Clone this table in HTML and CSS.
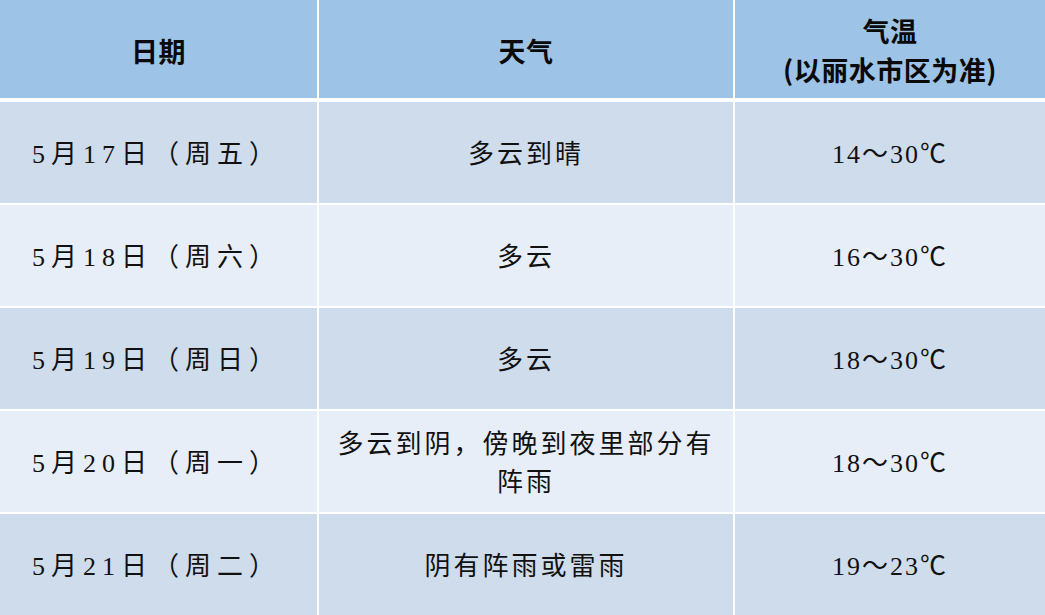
FILE: index.html
```html
<!DOCTYPE html>
<html lang="zh-CN">
<head>
<meta charset="utf-8">
<title>丽水天气预报</title>
<link rel="stylesheet" href="styles.css">
</head>
<body>
<div class="table">
  <div class="cell head"><span class="line">日期</span></div>
  <div class="cell head"><span class="line">天气</span></div>
  <div class="cell head stack"><span class="line">气温</span><span class="line">(以丽水市区为准)</span></div>

  <div class="cell dark date">5月17日（周五）</div>
  <div class="cell dark">多云到晴</div>
  <div class="cell dark temp">14～30℃</div>

  <div class="cell light date">5月18日（周六）</div>
  <div class="cell light">多云</div>
  <div class="cell light temp">16～30℃</div>

  <div class="cell dark date">5月19日（周日）</div>
  <div class="cell dark">多云</div>
  <div class="cell dark temp">18～30℃</div>

  <div class="cell light date">5月20日（周一）</div>
  <div class="cell light stack"><span class="wline">多云到阴，傍晚到夜里部分有</span><span class="wline">阵雨</span></div>
  <div class="cell light temp">18～30℃</div>

  <div class="cell dark date">5月21日（周二）</div>
  <div class="cell dark">阴有阵雨或雷雨</div>
  <div class="cell dark temp">19～23℃</div>
</div>
</body>
</html>
```

FILE: styles.css
```css
html, body {
  margin: 0;
  padding: 0;
  background: #ffffff;
}

.table {
  width: 1045px;
  height: 615px;
  display: grid;
  grid-template-columns: 317px 414px 310px;
  grid-template-rows: 100px repeat(4, 101px) 1fr;
  gap: 2px;
  background: #ffffff;
}

.cell {
  display: flex;
  align-items: center;
  justify-content: center;
  text-align: center;
  padding-top: 5px;
  box-sizing: border-box;
  color: #111111;
  font-family: "Liberation Serif", "Noto Sans CJK SC", serif;
  font-size: 26px;
  letter-spacing: 3px;
  line-height: 38px;
}

.stack {
  flex-direction: column;
}

.line {
  display: block;
  height: 39px;
  line-height: 39px;
}

.wline {
  display: block;
  height: 38px;
  line-height: 38px;
}

.head {
  margin-bottom: 2px;
  padding-top: 2px;
  background: #9dc3e6;
  font-family: "Noto Sans CJK SC", sans-serif;
  font-weight: 700;
  font-size: 27px;
  letter-spacing: 0.5px;
  color: #0a0a0a;
}

.dark {
  background: #cfdcec;
}

.light {
  background: #e8eef7;
}

.date {
  padding-right: 4px;
  letter-spacing: 6px;
}

.temp {
  letter-spacing: 2px;
}
```
